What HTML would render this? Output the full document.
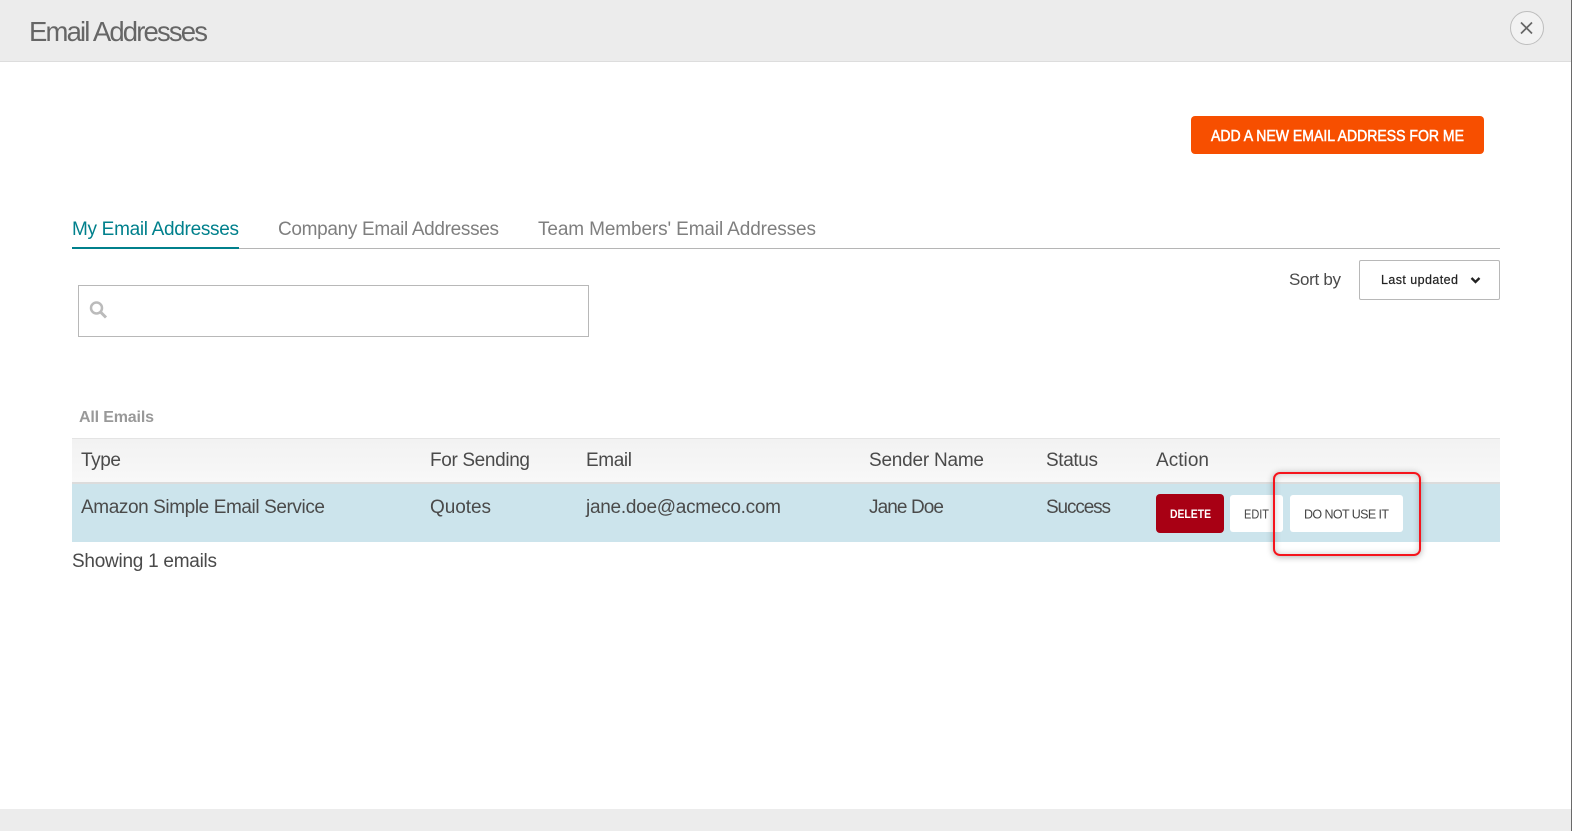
<!DOCTYPE html>
<html lang="en">
<head>
<meta charset="utf-8">
<title>Email Addresses</title>
<style>
html,body{margin:0;padding:0;width:1572px;height:831px;overflow:hidden;background:#fff}
.b{position:absolute;box-sizing:border-box}
svg{position:absolute;left:0;top:0}
text{font-family:"Liberation Sans",sans-serif;font-size:19px;fill:#4a4a4a}
</style>
</head>
<body>
<div class="b" style="left:0;top:0;width:1572px;height:62px;background:#ececec;border-bottom:1px solid #ddd"></div>
<div class="b" style="left:0;top:809px;width:1572px;height:22px;background:#ececec"></div>
<div class="b" style="left:1571px;top:0;width:1px;height:831px;background:#6a6a6a"></div>
<div class="b" style="left:1510px;top:11px;width:34px;height:34px;border-radius:50%;background:#f2f2f2;border:1px solid #bdbdbd"></div>
<div class="b" style="left:1191px;top:116px;width:293px;height:38px;border-radius:4px;background:#f74f00"></div>
<div class="b" style="left:72px;top:248px;width:1428px;height:1px;background:#b5b5b5"></div>
<div class="b" style="left:72px;top:247px;width:167px;height:2px;background:#00808c"></div>
<div class="b" style="left:78px;top:285px;width:511px;height:52px;border:1px solid #b8b8b8"></div>
<div class="b" style="left:1359px;top:260px;width:141px;height:40px;border:1px solid #b8b8b8;border-radius:2px"></div>
<div class="b" style="left:72px;top:438px;width:1428px;height:46px;background:linear-gradient(#f2f2f2,#f8f8f8);border-top:1px solid #e4e4e4;border-bottom:2px solid #dcdcdc"></div>
<div class="b" style="left:72px;top:484px;width:1428px;height:58px;background:#cce4ec"></div>
<div class="b" style="left:1156px;top:494px;width:68px;height:39px;border-radius:4px;background:#a80014"></div>
<div class="b" style="left:1230px;top:495px;width:53px;height:37px;border-radius:3px;background:#fff"></div>
<div class="b" style="left:1290px;top:495px;width:113px;height:37px;border-radius:3px;background:#fff"></div>
<div class="b" style="left:1273px;top:472px;width:148px;height:84px;border-radius:7px;border:2px solid #f5141c;box-shadow:0 1px 7px rgba(0,0,0,.32),inset 0 0 7px rgba(0,0,0,.2)"></div>
<svg width="1572" height="831" viewBox="0 0 1572 831" xmlns="http://www.w3.org/2000/svg">
<text x="29" y="41" textLength="179" style="font-size:27.500px;fill:#666">Email Addresses</text>
<path d="M1521 22.500L1532 33.500M1532 22.500L1521 33.500" stroke="#666" stroke-width="1.700" fill="none"/>
<text x="1211" y="141" textLength="253" lengthAdjust="spacingAndGlyphs" style="font-size:16px;stroke:#fff;stroke-width:.55px;fill:#fff">ADD A NEW EMAIL ADDRESS FOR ME</text>
<text x="72" y="235" textLength="167" style="fill:#00808c">My Email Addresses</text>
<text x="278" y="235" textLength="221" style="fill:#7f7f7f">Company Email Addresses</text>
<text x="538" y="235" textLength="278" style="fill:#7f7f7f">Team Members' Email Addresses</text>
<circle cx="96.500" cy="308" r="5.500" fill="none" stroke="#bbb" stroke-width="2.500"/>
<path d="M100.500 312L106 317.500" stroke="#bbb" stroke-width="3" fill="none"/>
<text x="1289" y="285" textLength="52" style="font-size:17px">Sort by</text>
<text x="1381" y="284" textLength="77" style="font-size:12.500px;fill:#222;stroke:#222;stroke-width:.2px">Last updated</text>
<path d="M1471.500 278L1475.500 282L1479.500 278" stroke="#222" stroke-width="2.300" fill="none"/>
<text x="79" y="422" textLength="75" style="font-size:16px;font-weight:700;fill:#999">All Emails</text>
<text x="81" y="466" textLength="40">Type</text>
<text x="430" y="466" textLength="100">For Sending</text>
<text x="586" y="466" textLength="46">Email</text>
<text x="869" y="466" textLength="115">Sender Name</text>
<text x="1046" y="466" textLength="52">Status</text>
<text x="1156" y="466" textLength="53">Action</text>
<text x="81" y="513" textLength="244">Amazon Simple Email Service</text>
<text x="430" y="513" textLength="61">Quotes</text>
<text x="586" y="513" textLength="195">jane.doe@acmeco.com</text>
<text x="869" y="513" textLength="75">Jane Doe</text>
<text x="1046" y="513" textLength="65">Success</text>
<text x="1170" y="518" textLength="41" lengthAdjust="spacingAndGlyphs" style="font-size:12px;font-weight:700;fill:#fff">DELETE</text>
<text x="1244" y="518.500" textLength="25" lengthAdjust="spacingAndGlyphs" style="font-size:12.500px;fill:#444">EDIT</text>
<text x="1304" y="518.500" textLength="85" style="font-size:12.500px;fill:#444">DO NOT USE IT</text>
<text x="72" y="567" textLength="145">Showing 1 emails</text>
</svg>
</body>
</html>
